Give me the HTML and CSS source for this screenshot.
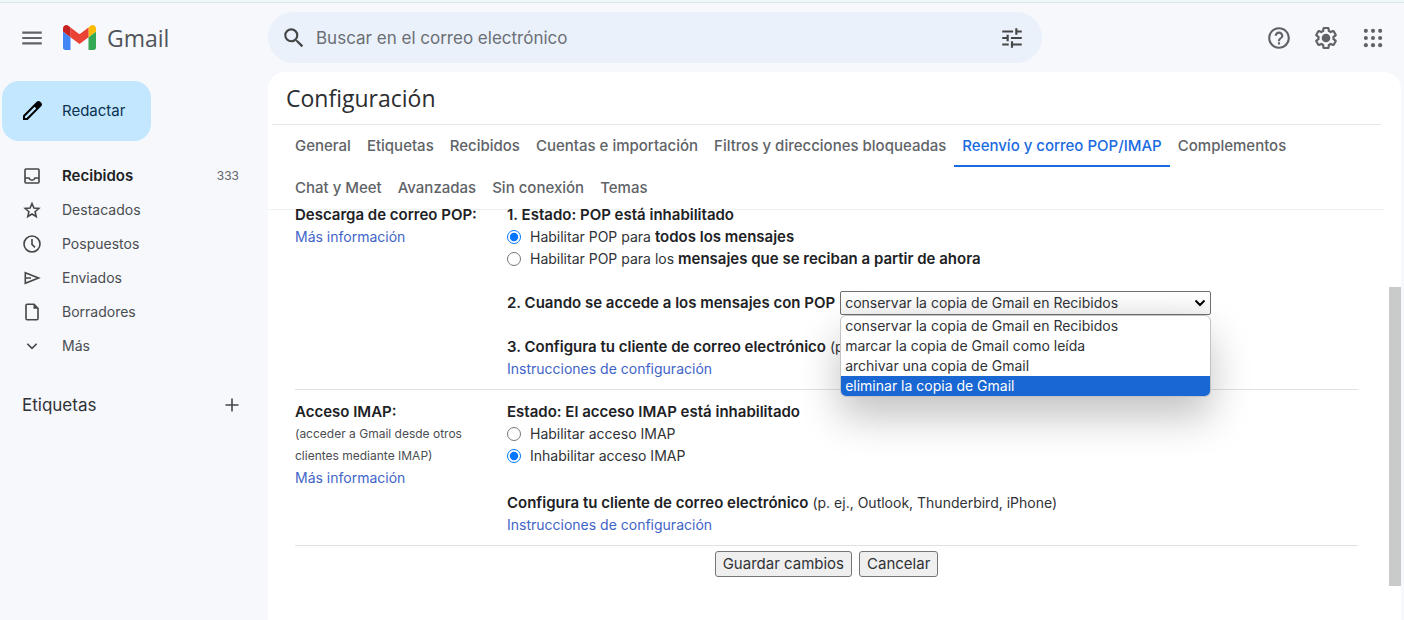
FILE: index.html
```html
<!DOCTYPE html>
<html lang="es">
<head>
<meta charset="utf-8">
<meta name="viewport" content="width=device-width, initial-scale=1">
<title>Configuración - Gmail</title>
<link rel="stylesheet" href="styles.css">
</head>
<body>
<header class="topbar">
  <div class="brand">
    <button class="icon-button" type="button" aria-label="Menú principal">
      <svg class="icon icon-menu" viewBox="0 0 24 24"><path d="M3 18h18v-2H3v2zm0-5h18v-2H3v2zm0-7v2h18V6H3z"/></svg>
    </button>
    <a class="logo" href="#">
      <svg class="logo-mark" viewBox="52 42 88 66" aria-hidden="true">
        <path fill="#4285f4" d="M58 108h14V74L52 59v43c0 3.32 2.69 6 6 6"/>
        <path fill="#34a853" d="M120 108h14c3.32 0 6-2.69 6-6V59l-20 15"/>
        <path fill="#fbbc04" d="M120 48v26l20-15v-8c0-7.42-8.47-11.65-14.4-7.2"/>
        <path fill="#ea4335" d="M72 74V48l24 18 24-18v26L96 92"/>
        <path fill="#c5221f" d="M52 51v8l20 15V48l-5.6-4.2c-5.94-4.45-14.4-.22-14.4 7.2"/>
      </svg>
      <span class="logo-text">Gmail</span>
    </a>
  </div>
  <form class="search" role="search">
    <button class="icon-button" type="button" aria-label="Buscar">
      <svg class="icon icon-search" viewBox="0 0 24 24"><path d="M15.5 14h-.79l-.28-.27A6.471 6.471 0 0 0 16 9.5 6.5 6.5 0 1 0 9.5 16c1.61 0 3.09-.59 4.23-1.57l.27.28v.79l5 4.99L20.49 19l-4.99-5zm-6 0C7.01 14 5 11.99 5 9.5S7.01 5 9.5 5 14 7.01 14 9.5 11.99 14 9.5 14z"/></svg>
    </button>
    <input class="search-input" type="text" placeholder="Buscar en el correo electrónico" aria-label="Buscar en el correo electrónico">
    <button class="icon-button" type="button" aria-label="Opciones de búsqueda">
      <svg class="icon icon-tune" viewBox="0 0 24 24"><path d="M3 17v2h6v-2H3zM3 5v2h10V5H3zm10 16v-2h8v-2h-8v-2h-2v6h2zM7 9v2H3v2h4v2h2V9H7zm14 4v-2H11v2h10zm-6-4h2V7h4V5h-4V3h-2v6z"/></svg>
    </button>
  </form>
  <div class="tools">
    <button class="icon-button" type="button" aria-label="Ayuda">
      <svg class="icon" viewBox="0 0 24 24"><path d="M11 18h2v-2h-2v2zm1-16C6.48 2 2 6.48 2 12s4.48 10 10 10 10-4.48 10-10S17.52 2 12 2zm0 18c-4.41 0-8-3.59-8-8s3.59-8 8-8 8 3.59 8 8-3.59 8-8 8zm0-14c-2.21 0-4 1.79-4 4h2c0-1.1.9-2 2-2s2 .9 2 2c0 2-3 1.75-3 5h2c0-2.25 3-2.5 3-5 0-2.21-1.79-4-4-4z"/></svg>
    </button>
    <button class="icon-button" type="button" aria-label="Configuración">
      <svg class="icon" viewBox="0 0 24 24"><path d="M13.85 22.25h-3.7c-.74 0-1.36-.54-1.45-1.27l-.27-1.89c-.27-.14-.53-.29-.79-.46l-1.8.72c-.7.26-1.47-.03-1.81-.65L2.2 15.53c-.35-.66-.2-1.44.36-1.88l1.53-1.19c-.01-.15-.02-.3-.02-.46 0-.15.01-.31.02-.46l-1.52-1.19c-.59-.45-.74-1.26-.37-1.88l1.85-3.19c.34-.62 1.11-.9 1.79-.63l1.81.73c.26-.17.52-.32.78-.46l.27-1.91c.09-.7.71-1.25 1.44-1.25h3.7c.74 0 1.36.54 1.45 1.27l.27 1.89c.27.14.53.29.79.46l1.8-.72c.71-.26 1.48.03 1.82.65l1.84 3.18c.36.66.2 1.44-.36 1.88l-1.52 1.19c.01.15.02.3.02.46s-.01.31-.02.46l1.52 1.19c.56.45.72 1.23.37 1.86l-1.86 3.22c-.34.62-1.11.9-1.8.63l-1.8-.72c-.26.17-.52.32-.78.46l-.27 1.91c-.1.68-.72 1.22-1.46 1.22zm-3.23-2h2.76l.37-2.55.53-.22c.44-.18.88-.44 1.34-.78l.45-.34 2.38.96 1.38-2.4-2.03-1.58.07-.56c.03-.26.06-.51.06-.78s-.03-.53-.06-.78l-.07-.56 2.03-1.58-1.39-2.4-2.39.96-.45-.35c-.42-.32-.87-.58-1.33-.77l-.52-.22-.37-2.55h-2.76l-.37 2.55-.53.21c-.44.19-.88.44-1.34.79l-.45.33-2.38-.95-1.39 2.39 2.03 1.58-.07.56a7 7 0 0 0-.06.79c0 .26.02.53.06.78l.07.56-2.03 1.58 1.38 2.4 2.39-.96.45.35c.43.33.86.58 1.33.77l.53.22.38 2.55z"/><circle cx="12" cy="12" r="4"/></svg>
    </button>
    <button class="icon-button" type="button" aria-label="Aplicaciones de Google">
      <svg class="icon" viewBox="0 0 24 24"><circle cx="5.4" cy="5.4" r="1.9"/><circle cx="12" cy="5.4" r="1.9"/><circle cx="18.6" cy="5.4" r="1.9"/><circle cx="5.4" cy="12" r="1.9"/><circle cx="12" cy="12" r="1.9"/><circle cx="18.6" cy="12" r="1.9"/><circle cx="5.4" cy="18.6" r="1.9"/><circle cx="12" cy="18.6" r="1.9"/><circle cx="18.6" cy="18.6" r="1.9"/></svg>
    </button>
  </div>
</header>

<div class="layout">
  <aside class="sidebar">
    <button class="compose" type="button">
      <svg class="compose-icon" viewBox="0 0 24 24"><path fill-rule="evenodd" d="M20.3 2.8 21.2 3.7c1 1 1 2.6 0 3.6L7.6 21H3v-4.600L16.700 2.800c1-1 2.600-1 3.600 0zM5 17.400V19h1.600L16.200 9.400l-1.600-1.600z"/></svg>
      <span>Redactar</span>
    </button>
    <nav class="folders">
      <a class="folder folder-current" href="#"><svg class="folder-icon" viewBox="0 0 20 20"><rect x="3" y="3" width="14" height="14" rx="1"/><path d="M3 12h4c.5 1.500 1.600 2.200 3 2.200s2.500-.7 3-2.200h4"/></svg><span class="folder-name">Recibidos</span><span class="count">333</span></a>
      <a class="folder" href="#"><svg class="folder-icon" viewBox="0 0 20 20"><path d="m10 3.500 1.900 4.600 4.900.4-3.700 3.200 1.100 4.800-4.200-2.500-4.200 2.500 1.100-4.800-3.700-3.200 4.900-.4z"/></svg><span class="folder-name">Destacados</span></a>
      <a class="folder" href="#"><svg class="folder-icon" viewBox="0 0 20 20"><circle cx="10" cy="10" r="8"/><path d="M10 5v5.400l3 3"/></svg><span class="folder-name">Pospuestos</span></a>
      <a class="folder" href="#"><svg class="folder-icon" viewBox="0 0 20 20"><path d="M3.300 4.700 16.600 10 3.300 15.300zM3.300 10H9"/></svg><span class="folder-name">Enviados</span></a>
      <a class="folder" href="#"><svg class="folder-icon" viewBox="0 0 20 20"><path d="M12 2.300H5.200c-.7 0-1.200.5-1.200 1.200v13c0 .7.5 1.200 1.200 1.200h9.600c.7 0 1.200-.5 1.200-1.200V6.300z"/><path class="fold" d="M11.500 2.300v4.500H16z"/></svg><span class="folder-name">Borradores</span></a>
      <a class="folder" href="#"><svg class="folder-icon" viewBox="0 0 20 20"><path d="m5.300 7.800 4.700 4.600 4.700-4.600"/></svg><span class="folder-name">Más</span></a>
    </nav>
    <div class="labels">
      <h2 class="labels-title">Etiquetas</h2>
      <button class="icon-button" type="button" aria-label="Crear etiqueta"><svg class="folder-icon" viewBox="0 0 20 20"><path d="M10 3.500v13M3.500 10h13"/></svg></button>
    </div>
  </aside>

  <main class="panel">
    <h1 class="panel-title">Configuración</h1>
    <nav class="tabs">
      <a class="tab" href="#">General</a>
      <a class="tab" href="#">Etiquetas</a>
      <a class="tab" href="#">Recibidos</a>
      <a class="tab" href="#">Cuentas e importación</a>
      <a class="tab" href="#">Filtros y direcciones bloqueadas</a>
      <a class="tab tab-active" href="#" aria-current="page">Reenvío y correo POP/IMAP</a>
      <a class="tab" href="#">Complementos</a>
      <a class="tab" href="#">Chat y Meet</a>
      <a class="tab" href="#">Avanzadas</a>
      <a class="tab" href="#">Sin conexión</a>
      <a class="tab" href="#">Temas</a>
    </nav>
    <div class="scroller">
      <form class="settings">
        <section class="setting">
          <div class="setting-label">
            <h3 class="line strong">Descarga de correo POP:</h3>
            <a class="line link" href="#">Más información</a>
          </div>
          <div class="setting-body">
            <div class="group">
              <p class="line strong">1. Estado: POP está inhabilitado</p>
              <label class="line choice"><input class="radio" type="radio" name="pop" checked><span>Habilitar POP para <b class="strong">todos los mensajes</b></span></label>
              <label class="line choice"><input class="radio" type="radio" name="pop"><span>Habilitar POP para los <b class="strong">mensajes que se reciban a partir de ahora</b></span></label>
            </div>
            <div class="line pop-action">
              <label class="strong" for="pop-action">2. Cuando se accede a los mensajes con POP</label>
              <div class="dropdown">
                <select class="select" id="pop-action">
                  <option>conservar la copia de Gmail en Recibidos</option>
                  <option>marcar la copia de Gmail como leída</option>
                  <option>archivar una copia de Gmail</option>
                  <option>eliminar la copia de Gmail</option>
                </select>
                <svg class="select-arrow" viewBox="0 0 12 8" aria-hidden="true"><path d="m1.500 1.500 4.500 4.500 4.500-4.500"/></svg>
                <ul class="options" role="listbox" aria-label="Opciones de copia">
                  <li class="option" role="option">conservar la copia de Gmail en Recibidos</li>
                  <li class="option" role="option">marcar la copia de Gmail como leída</li>
                  <li class="option" role="option">archivar una copia de Gmail</li>
                  <li class="option option-active" role="option" aria-selected="true">eliminar la copia de Gmail</li>
                </ul>
              </div>
            </div>
            <div class="group">
              <p class="line"><b class="strong">3. Configura tu cliente de correo electrónico</b> (p. ej., Outlook)</p>
              <a class="line link" href="#">Instrucciones de configuración</a>
            </div>
          </div>
        </section>
        <section class="setting">
          <div class="setting-label">
            <h3 class="line strong">Acceso IMAP:</h3>
            <p class="line note">(acceder a Gmail desde otros clientes mediante IMAP)</p>
            <a class="line link" href="#">Más información</a>
          </div>
          <div class="setting-body setting-body-imap">
            <div class="group">
              <p class="line strong">Estado: El acceso IMAP está inhabilitado</p>
              <label class="line choice"><input class="radio" type="radio" name="imap"><span>Habilitar acceso IMAP</span></label>
              <label class="line choice"><input class="radio" type="radio" name="imap" checked><span>Inhabilitar acceso IMAP</span></label>
            </div>
            <div class="group">
              <p class="line"><b class="strong">Configura tu cliente de correo electrónico</b> (p. ej., Outlook, Thunderbird, iPhone)</p>
              <a class="line link" href="#">Instrucciones de configuración</a>
            </div>
          </div>
        </section>
        <div class="actions">
          <button class="action" type="button">Guardar cambios</button>
          <button class="action" type="button">Cancelar</button>
        </div>
      </form>
      <div class="scrollbar"><div class="thumb"></div></div>
    </div>
  </main>
</div>
</body>
</html>
```

FILE: styles.css
```css
* { box-sizing: border-box; }

body {
  margin: 0;
  height: 100vh;
  display: flex;
  flex-direction: column;
  overflow: hidden;
  background: #f6f8fc;
  border-top: 2px solid #eff8f9;
  color: #303236;
  font: 14px/22px Inter, sans-serif;
}

h1, h2, h3, p, ul { margin: 0; padding: 0; font-weight: 400; font-size: inherit; }
a { color: inherit; text-decoration: none; }
button, input, select { font: inherit; color: inherit; }

.icon-button {
  display: flex;
  padding: 0;
  border: 0;
  background: none;
  cursor: pointer;
}
.icon { width: 26px; height: 26px; fill: #5f6368; }

/* Top bar */
.topbar {
  flex: none;
  display: grid;
  grid-template-columns: 268px minmax(0, 774px) 1fr;
  align-items: center;
  height: 70px;
  border-top: 1px solid #dce7ec;
}
.brand { display: flex; align-items: center; gap: 18px; padding-left: 19px; }
.logo { display: flex; align-items: center; gap: 11px; }
.logo-mark { width: 33px; height: 25px; }
.logo-text { font: 23px/28px "Open Sans", sans-serif; color: #50545a; }
.search {
  display: flex;
  align-items: center;
  height: 51px;
  padding: 0 17px 0 13px;
  border-radius: 26px;
  background: #eaf1fb;
}
.icon-search { fill: #444746; }
.icon-tune { fill: #444746; }
.search-input {
  flex: 1;
  min-width: 0;
  padding: 0 9px;
  border: 0;
  outline: 0;
  background: none;
  font-size: 17px;
}
.search-input::placeholder { color: #6b6f75; opacity: 1; }
.tools { display: flex; justify-content: flex-end; gap: 21px; padding-right: 18px; }

/* Sidebar */
.layout { flex: 1; min-height: 0; display: grid; grid-template-columns: 268px minmax(0, 1fr); }
.compose {
  display: flex;
  align-items: center;
  gap: 18px;
  height: 60px;
  margin: 9px 0 0 2px;
  padding: 0 26px 0 18px;
  border: 0;
  border-radius: 17px;
  background: #c2e7ff;
  color: #0b3350;
  font-size: 15px;
  cursor: pointer;
}
.compose-icon { width: 24px; height: 24px; fill: #000; }
.folders { display: flex; flex-direction: column; padding-top: 18px; }
.folder { display: flex; align-items: center; gap: 20px; height: 34px; padding: 0 29px 0 22px; color: #4a4d51; }
.folder-icon { width: 20px; height: 20px; fill: none; stroke: #444746; stroke-width: 1.6; }
.folder-icon .fold { fill: #444746; stroke: none; }
.folder-name { flex: 1; }
.folder-current .folder-name { font-size: 15px; font-weight: 600; color: #202124; }
.count { font-size: 12px; color: #5f6368; }
.labels { display: flex; align-items: center; justify-content: space-between; padding: 31px 26px 0 22px; }
.labels-title { font-size: 17px; color: #303236; }

/* Settings panel */
.panel {
  display: flex;
  flex-direction: column;
  min-height: 0;
  margin-right: 3px;
  border-radius: 17px 17px 0 0;
  background: #fff;
}
.panel-title {
  margin: 0 20px 0 4px;
  padding: 0 14px;
  border-bottom: 1px solid #e6e8ea;
  font: 23px/52px "Open Sans", sans-serif;
  color: #2b2d30;
}
.tabs {
  display: flex;
  flex-wrap: wrap;
  margin-right: 17px;
  padding: 0 0 0 19px;
  border-bottom: 1px solid #f0f1f3;
}
.tab {
  height: 42px;
  padding: 0 8px;
  border-bottom: 2px solid transparent;
  font-size: 15px;
  font-weight: 450;
  line-height: 41px;
  color: #606367;
}
.tab-active { color: #1a6be0; border-color: #1a6be0; }

.scroller { flex: 1; min-height: 0; display: flex; }
.settings { flex: 1; margin-top: -6px; padding: 0 31px 0 27px; }
.setting {
  display: grid;
  grid-template-columns: 212px minmax(0, 1fr);
  padding-bottom: 9px;
  border-bottom: 1px solid #dfe1e4;
}
.setting + .setting { padding-top: 11px; }
.setting-body { display: flex; flex-direction: column; gap: 22px; }
.setting-body-imap { gap: 25px; }
.line { display: block; }
.group .line { height: 22px; }
.strong { font-size: 15px; font-weight: 600; color: #202124; }
.link { color: #3f64c8; }
.note { padding-right: 20px; font-size: 12px; color: #4a4d51; }
.line.choice { display: flex; align-items: center; gap: 9px; }
.radio { flex: none; width: 14px; height: 14px; margin: 0; accent-color: #0075ff; }
.pop-action { display: flex; align-items: center; gap: 5px; height: 22px; }
.dropdown { position: relative; flex: 0 1 371px; }
.select {
  display: block;
  width: 100%;
  height: 24px;
  padding: 0 20px 0 4px;
  border: 1px solid #6f6f6f;
  border-radius: 2px;
  background: linear-gradient(#fff, #f3f3f3);
  appearance: none;
}
.select-arrow {
  position: absolute;
  right: 5px;
  top: 8px;
  width: 12px;
  height: 8px;
  fill: none;
  stroke: #000;
  stroke-width: 2;
  pointer-events: none;
}
.options {
  position: absolute;
  z-index: 1;
  top: 24px;
  left: 0;
  right: 0;
  overflow: hidden;
  border: 1px solid #c4c4c4;
  border-radius: 6px;
  background: #fff;
  box-shadow: 0 20px 40px rgba(0, 0, 0, 0.24);
  list-style: none;
}
.option { padding: 0 4px; line-height: 20px; }
.option-active { background: #1967d2; color: #fff; }

.actions { display: flex; justify-content: center; gap: 7px; padding-top: 5px; }
.action {
  height: 26px;
  padding: 0 7px;
  border: 1px solid #767676;
  border-radius: 3px;
  background: #efefef;
  font-size: 15px;
}
.scrollbar { flex: none; width: 12px; }
.thumb { height: 73%; margin-top: 77px; background: #c9cbcb; }
```
